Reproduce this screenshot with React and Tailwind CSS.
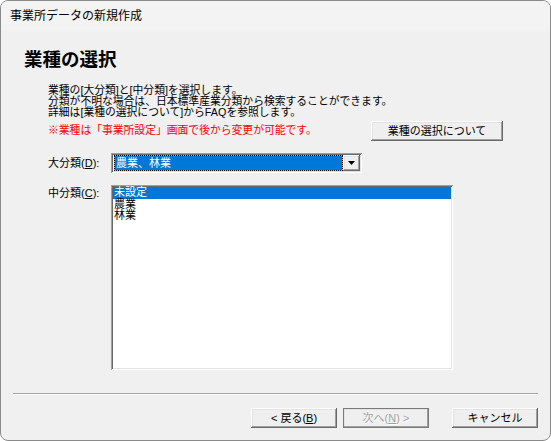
import React from "react";

const font = { fontFamily: '"Liberation Sans", "Noto Sans CJK JP", sans-serif' };

function Btn({ children, className = "", disabled = false }) {
  return (
    <div
      className={
        "h-[20px] flex items-center justify-center text-[11px] leading-none bg-[#efefef] shadow-[inset_-1px_-1px_#696969,inset_1px_1px_#ffffff,inset_-2px_-2px_#a0a0a0,inset_2px_2px_#e3e3e3] " +
        (disabled ? "text-[#a0a0a0] outline outline-1 outline-[#7a7a7a] -outline-offset-1 " : "text-black ") +
        className
      }
    >
      {children}
    </div>
  );
}

export default function App() {
  return (
    <div
      className="w-[551px] h-[441px] bg-[#f0f0f0] border border-[#8a8a8a] rounded-[8px] overflow-hidden flex flex-col text-black"
      style={font}
    >
      {/* title bar */}
      <div className="h-[30px] bg-[#f3f3f3] flex items-center pl-[9px] text-[12px]">
        事業所データの新規作成
      </div>

      {/* heading */}
      <div className="mt-[19px] ml-[23px] text-[18.5px] font-bold leading-[20px]">業種の選択</div>

      {/* description */}
      <div className="ml-[47px] mt-[15px] text-[10.8px] leading-[11px]">
        <div>業種の[大分類]と[中分類]を選択します。</div>
        <div>分類が不明な場合は、日本標準産業分類から検索することができます。</div>
        <div>詳細は[業種の選択について]からFAQを参照します。</div>
      </div>

      <div className="ml-[47px] w-[455px] mt-[3px] flex items-start justify-between">
        <div className="pt-[4px] text-[10.8px] leading-[11px] text-[#ff0000]">
          ※業種は「事業所設定」画面で後から変更が可能です。
        </div>
        <Btn className="w-[132px]">業種の選択について</Btn>
      </div>

      {/* combo */}
      <div className="ml-[47px] mt-[12px] flex items-center">
        <div className="w-[63px] text-[11px] leading-none">
          大分類(<span className="underline">D</span>):
        </div>
        <div className="w-[251px] h-[20px] bg-white flex shadow-[inset_1px_1px_#a0a0a0,inset_-1px_-1px_#ffffff,inset_2px_2px_#696969,inset_-2px_-2px_#e3e3e3] p-[2px]">
          <div className="flex-1 ml-[1px] bg-[#f7a35c]">
            <div className="h-full border border-dotted border-black bg-clip-padding bg-[#0078d7] text-white text-[11px] leading-[14px] pl-[1px]">
              農業、林業
            </div>
          </div>
          <div className="w-[17px] h-full flex items-center justify-center bg-[#efefef] shadow-[inset_-1px_-1px_#696969,inset_1px_1px_#ffffff,inset_-2px_-2px_#a0a0a0,inset_2px_2px_#e3e3e3]">
            <svg width="7" height="4" viewBox="0 0 7 4">
              <path d="M0 0H7L3.5 4Z" fill="#000" />
            </svg>
          </div>
        </div>
      </div>

      {/* list */}
      <div className="ml-[47px] mt-[12px] flex items-start">
        <div className="w-[63px] pt-[3px] text-[11px] leading-none">
          中分類(<span className="underline">C</span>):
        </div>
        <div className="w-[342px] h-[185px] bg-white shadow-[inset_1px_1px_#a0a0a0,inset_-1px_-1px_#ffffff,inset_2px_2px_#696969,inset_-2px_-2px_#e3e3e3] p-[2px] text-[11px] leading-[11.5px]">
          <div className="bg-[#0078d7] text-white pl-[1px]">未設定</div>
          <div className="pl-[1px]">農業</div>
          <div className="pl-[1px]">林業</div>
        </div>
      </div>

      {/* separator */}
      <div className="ml-[12px] w-[525px] mt-[23px] border-t border-[#a0a0a0] border-b border-b-white" />

      {/* buttons */}
      <div className="mt-[13px] flex justify-end pr-[12px]">
        <Btn className="w-[86px]">
          &lt; 戻る(<span className="underline">B</span>)
        </Btn>
        <Btn disabled className="w-[86px] ml-[6px] [text-shadow:1px_1px_#ffffff]">
          次へ(<span className="underline">N</span>) &gt;
        </Btn>
        <Btn className="w-[86px] ml-[23px]">キャンセル</Btn>
      </div>
    </div>
  );
}
